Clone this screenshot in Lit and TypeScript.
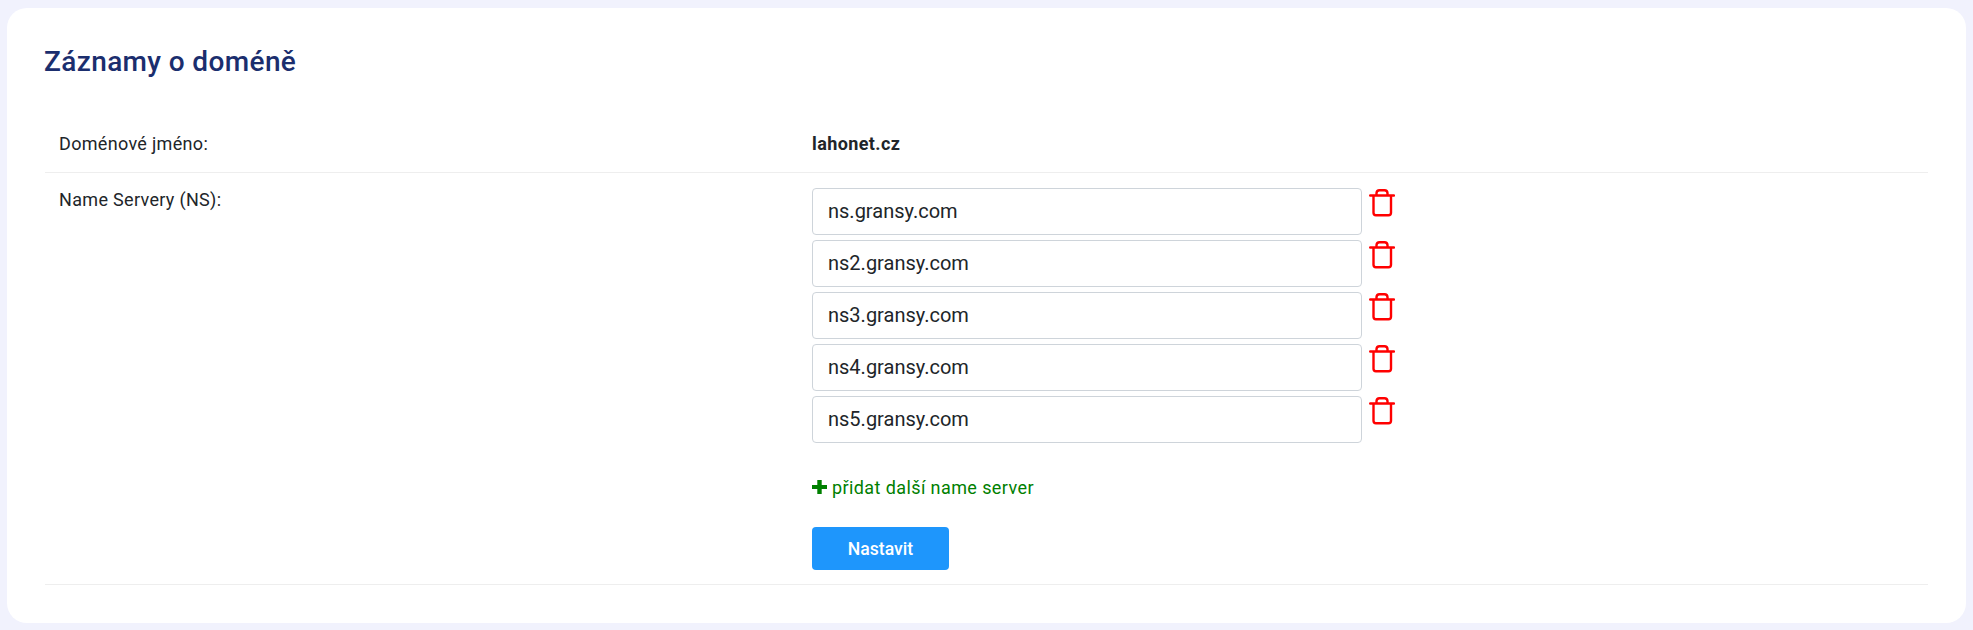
import { LitElement, html, css, svg } from "lit";
import { customElement } from "lit/decorators.js";

const servers = ["ns.gransy.com", "ns2.gransy.com", "ns3.gransy.com", "ns4.gransy.com", "ns5.gransy.com"];

@customElement("app-root")
export class AppRoot extends LitElement {
  static styles = css`
    :host {
      display: block;
      height: 630px;
      background: #f1f2fd;
      padding: 8px 7px 7px;
      box-sizing: border-box;
      font-family: Roboto, "Liberation Sans", sans-serif;
      color: #212529;
    }
    .card {
      height: 615px;
      background: #fff;
      border-radius: 20px;
      padding: 38px 38px 0;
      box-sizing: border-box;
    }
    h1 {
      margin: 0 0 0 -1px;
      font-size: 28px;
      line-height: 32px;
      font-weight: 500;
      letter-spacing: 0.37px;
      color: #1b2e6e;
    }
    .row {
      display: grid;
      grid-template-columns: 753px 1fr;
      padding: 0 14px 0 14px;
      border-bottom: 1px solid #eeeeee;
      font-size: 18px;
      letter-spacing: 0.32px;
    }
    .row.first {
      margin-top: 39px;
      height: 56px;
      padding-bottom: 2px;
      align-items: center;
      box-sizing: border-box;
    }
    .row.second {
      padding-top: 15px;
      padding-bottom: 14px;
    }
    .row.second .label { line-height: 24px; }
    .value { font-weight: 700; letter-spacing: 0.4px; }
    .inputs { display: flex; flex-direction: column; gap: 5px; }
    .line { display: flex; align-items: flex-start; gap: 7px; }
    input {
      width: 550px;
      height: 47px;
      box-sizing: border-box;
      border: 1px solid #ced4da;
      border-radius: 4px;
      padding: 0 15px 2px;
      font: 400 20px Roboto, sans-serif;
      color: #212529;
      background: #fff;
    }
    .trash { width: 26px; height: 28px; display: block; margin-top: 1px; }
    .add {
      display: flex;
      align-items: center;
      gap: 5px;
      margin-top: 33px;
      color: #008000;
      font-size: 18px;
      letter-spacing: 0.4px;
      line-height: 24px;
    }
    .add svg { width: 15px; height: 14px; display: block; margin-bottom: 2px; }
    button {
      display: block;
      margin-top: 27px;
      width: 137px;
      height: 43px;
      border: 0;
      border-radius: 4px;
      background: #1e96fc;
      color: #fff;
      font: 500 17.6px Roboto, sans-serif;
    }
  `;

  private trash() {
    return html`<svg class="trash" viewBox="0 0 26 28" fill="none" stroke="#ff0000" stroke-width="2.4">
      ${svg`<path d="M1.200 6.500H25" stroke-linecap="round"/>
      <path d="M7.500 6V4A3 3 0 0 1 10.500 1.200h5A3 3 0 0 1 18.500 4V6"/>
      <path d="M4.500 7V23.800a2.500 2.500 0 0 0 2.500 2.500H19.500a2.500 2.500 0 0 0 2.500-2.500V7"/>`}
    </svg>`;
  }

  render() {
    return html`<div class="card">
      <h1>Záznamy o doméně</h1>
      <div class="row first"><div>Doménové jméno:</div><div class="value">lahonet.cz</div></div>
      <div class="row second">
        <div class="label">Name Servery (NS):</div>
        <div>
          <div class="inputs">
            ${servers.map((s) => html`<div class="line"><input type="text" .value=${s} />${this.trash()}</div>`)}
          </div>
          <div class="add">
            <svg viewBox="0 0 15 14"><path fill="#008000" d="M5.300 0h4.400v5H15v4H9.700V14H5.300V9H0V5h5.300z"/></svg>
            <span>přidat další name server</span>
          </div>
          <button>Nastavit</button>
        </div>
      </div>
    </div>`;
  }
}
